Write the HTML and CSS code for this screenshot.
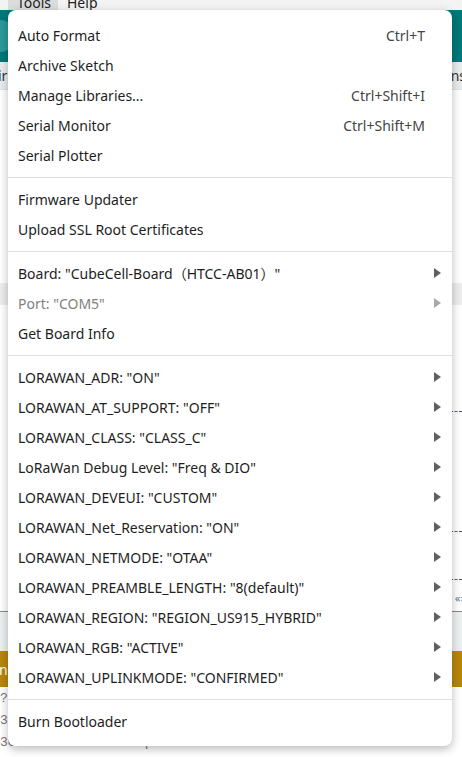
FILE: index.html
```html
<!DOCTYPE html>
<html>
<head>
<meta charset="utf-8">
<link rel="stylesheet" href="styles.css">
</head>
<body>
<div class="app">
  <div class="menubar">
    <span class="mb-item active">Tools</span>
    <span class="mb-item">Help</span>
  </div>
  <div class="toolbar">
    <div class="tb-btn"></div>
  </div>
  <div class="tabbar">
    <span class="tab-left">ir</span>
    <span class="tab-right">ns</span>
  </div>
  <div class="editor">
    <div class="ed-line hl"></div>
    <div class="ed-dash d1"></div>
    <div class="ed-dash d2"></div>
    <div class="ed-dash d3"></div>
    <div class="ed-sym">«»</div>
  </div>
  <div class="console-head"></div>
  <div class="notice"><span>n</span></div>
  <div class="console">
    <div class="c-line">?J</div>
    <div class="c-line">3C</div>
    <div class="c-line">3C6025 : 5d 5d 55sq 0x000000 d2 d0 20 0</div>
  </div>
</div>

<div class="menu">
  <div class="item"><span>Auto Format</span><span class="sc">Ctrl+T</span></div>
  <div class="item"><span>Archive Sketch</span></div>
  <div class="item"><span>Manage Libraries...</span><span class="sc">Ctrl+Shift+I</span></div>
  <div class="item"><span>Serial Monitor</span><span class="sc">Ctrl+Shift+M</span></div>
  <div class="item"><span>Serial Plotter</span></div>
  <div class="sep"></div>
  <div class="item"><span>Firmware Updater</span></div>
  <div class="item"><span>Upload SSL Root Certificates</span></div>
  <div class="sep"></div>
  <div class="item sub"><span>Board: "CubeCell-Board（HTCC-AB01）"</span></div>
  <div class="item sub disabled"><span>Port: "COM5"</span></div>
  <div class="item"><span>Get Board Info</span></div>
  <div class="sep"></div>
  <div class="item sub"><span>LORAWAN_ADR: "ON"</span></div>
  <div class="item sub"><span>LORAWAN_AT_SUPPORT: "OFF"</span></div>
  <div class="item sub"><span>LORAWAN_CLASS: "CLASS_C"</span></div>
  <div class="item sub"><span>LoRaWan Debug Level: "Freq &amp; DIO"</span></div>
  <div class="item sub"><span>LORAWAN_DEVEUI: "CUSTOM"</span></div>
  <div class="item sub"><span>LORAWAN_Net_Reservation: "ON"</span></div>
  <div class="item sub"><span>LORAWAN_NETMODE: "OTAA"</span></div>
  <div class="item sub"><span>LORAWAN_PREAMBLE_LENGTH: "8(default)"</span></div>
  <div class="item sub"><span>LORAWAN_REGION: "REGION_US915_HYBRID"</span></div>
  <div class="item sub"><span>LORAWAN_RGB: "ACTIVE"</span></div>
  <div class="item sub"><span>LORAWAN_UPLINKMODE: "CONFIRMED"</span></div>
  <div class="sep"></div>
  <div class="item"><span>Burn Bootloader</span></div>
</div>
</body>
</html>
```
FILE: styles.css
```css
html, body {
  margin: 0;
  padding: 0;
  width: 462px;
  height: 757px;
  overflow: hidden;
  font-family: "Noto Sans", "Noto Sans CJK SC", sans-serif;
  background: #fff;
}
.app {
  display: flex;
  flex-direction: column;
  height: 757px;
  position: relative;
}
.menubar {
  height: 10px;
  flex: 0 0 10px;
  background: #f3f3f3;
  display: flex;
  align-items: flex-end;
  padding-left: 8px;
  overflow: hidden;
  font-size: 14px;
  color: #222;
}
.mb-item {
  padding: 0 8px 0 9px;
  line-height: 20px;
  height: 20px;
  margin-bottom: -3px;
}
.mb-item.active { background: #dcdcdc; width: 33px; }
.toolbar {
  flex: 0 0 52px;
  background: #00787a;
  overflow: hidden;
}
.tb-btn {
  width: 32px; height: 32px;
  border-radius: 50%;
  background: #2b9a9a;
  margin: 10px 0 0 -16px;
}
.tabbar {
  flex: 0 0 27px;
  background: #e9eded;
  display: flex;
  justify-content: space-between;
  align-items: center;
  font-size: 14px;
  color: #333;
  border-bottom: 1px solid #dde2e2;
}
.tab-left { margin-left: -2px; }
.tab-right { margin-right: -4px; }
.editor {
  flex: 1;
  position: relative;
  background: #fff;
}
.ed-line.hl {
  position: absolute;
  left: 0; right: 0; top: 193px; height: 22px;
  background: #ededed;
}
.ed-dash {
  position: absolute;
  right: 0; width: 12px; height: 1px;
  border-top: 1px dashed #1f6f7a;
}
.d1 { top: 321px; }
.d2 { top: 441px; }
.d3 { top: 489px; }
.ed-sym {
  position: absolute; right: -4px; top: 500px;
  font-size: 11px; color: #4a7fb0;
}
.console-head {
  flex: 0 0 39px;
  background: #edf0f0;
  border-top: 1px solid #8a8a8a;
}
.notice {
  flex: 0 0 36px;
  background: #b8860b;
  color: #fff;
  font-size: 14px;
  display: flex;
  align-items: center;
}
.notice span { margin-left: -1px; }
.console {
  flex: 0 0 69px;
  background: #fff;
  font-family: "Liberation Mono", monospace;
  font-size: 13px;
  color: #777;
  padding-top: 1px;
  line-height: 22px;
}
.c-line { white-space: nowrap; }

.menu {
  position: absolute;
  left: 8px;
  top: 10px;
  width: 444px;
  padding: 10px 0;
  background: #fff;
  border-radius: 8px;
  box-shadow: 0 3px 10px rgba(0,0,0,0.28);
  font-size: 14px;
  color: #1e1e1e;
}
.item {
  height: 30px;
  display: flex;
  align-items: center;
  justify-content: space-between;
  padding: 0 27px 0 10px;
  position: relative;
  white-space: nowrap;
}
.item .sc { color: #444; }
.item.sub::after {
  content: "";
  position: absolute;
  right: 11px;
  top: 10px;
  border-left: 7px solid #606060;
  border-top: 5px solid transparent;
  border-bottom: 5px solid transparent;
}
.item.disabled { color: #808080; }
.item.disabled::after { border-left-color: #a8a8a8; }
.sep {
  height: 1px;
  background: #dedede;
  margin: 7px 0 6px;
}
```
